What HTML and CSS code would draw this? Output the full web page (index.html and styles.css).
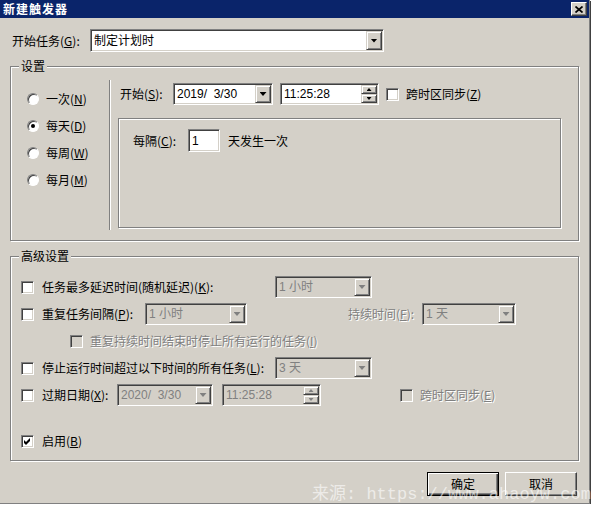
FILE: index.html
```html
<!DOCTYPE html>
<html lang="zh-CN">
<head>
    <meta charset="UTF-8">
    <title>新建触发器</title>
    <link rel="stylesheet" href="styles.css">
</head>
<body>

<div class="dialog">
    <div class="titlebar">
        <span class="title">新建触发器</span>
        <span class="close-btn">
            <svg width="8" height="7" viewBox="0 0 8 7"><path d="M0.5 0.5 L7.5 6.5 M7.5 0.5 L0.5 6.5" stroke="#000" stroke-width="1.7"/></svg>
        </span>
    </div>

    <div class="content">
        <div class="task-row">
            <span class="task-label">开始任务(<u>G</u>):</span>
            <div class="field task-combo"><span class="field-text">制定计划时</span><span class="drop"></span></div>
        </div>

        <!-- 设置 -->
        <div class="group etched settings">
            <span class="legend">设置</span>
            <div class="freq">
                <div class="radio-row"><span class="radio"></span>一次(<u>N</u>)</div>
                <div class="radio-row"><span class="radio checked"></span>每天(<u>D</u>)</div>
                <div class="radio-row"><span class="radio"></span>每周(<u>W</u>)</div>
                <div class="radio-row"><span class="radio"></span>每月(<u>M</u>)</div>
            </div>
            <div class="sep"></div>
            <div class="schedule">
                <div class="start-row">
                    <span class="start-label">开始(<u>S</u>):</span>
                    <div class="field date-combo"><span class="field-text">2019/&nbsp;&nbsp;3/30</span><span class="drop"></span></div>
                    <div class="field time-field">
                        <span class="field-text">11:25:28</span>
                        <span class="spin"><span class="spin-btn up"></span><span class="spin-btn down"></span></span>
                    </div>
                    <span class="check"></span>
                    <span>跨时区同步(<u>Z</u>)</span>
                </div>
                <div class="panel etched">
                    <div class="every-row">
                        <span class="every-label">每隔(<u>C</u>):</span>
                        <div class="field every-input"><span class="field-text">1</span></div>
                        <span class="every-unit">天发生一次</span>
                    </div>
                </div>
            </div>
        </div>

        <!-- 高级设置 -->
        <div class="group etched advanced">
            <span class="legend">高级设置</span>
            <div class="adv-row">
                <span class="check"></span>
                <span class="long-label">任务最多延迟时间(随机延迟)(<u>K</u>):</span>
                <div class="field disabled short-combo"><span class="field-text">1 小时</span><span class="drop"></span></div>
            </div>
            <div class="adv-row">
                <span class="check"></span>
                <span class="repeat-label">重复任务间隔(<u>P</u>):</span>
                <div class="field disabled repeat-combo"><span class="field-text">1 小时</span><span class="drop"></span></div>
                <span class="dim duration-label">持续时间(<u>F</u>):</span>
                <div class="field disabled duration-combo"><span class="field-text">1 天</span><span class="drop"></span></div>
            </div>
            <div class="adv-row indent">
                <span class="check disabled"></span>
                <span class="dim">重复持续时间结束时停止所有运行的任务(<u>I</u>)</span>
            </div>
            <div class="adv-row">
                <span class="check"></span>
                <span class="long-label">停止运行时间超过以下时间的所有任务(<u>L</u>):</span>
                <div class="field disabled short-combo"><span class="field-text">3 天</span><span class="drop"></span></div>
            </div>
            <div class="adv-row">
                <span class="check"></span>
                <span class="expire-label">过期日期(<u>X</u>):</span>
                <div class="field disabled expire-date"><span class="field-text">2020/&nbsp;&nbsp;3/30</span><span class="drop"></span></div>
                <div class="field disabled expire-time">
                    <span class="field-text">11:25:28</span>
                    <span class="spin"><span class="spin-btn up"></span><span class="spin-btn down"></span></span>
                </div>
                <span class="check disabled expire-check"></span>
                <span class="dim">跨时区同步(<u>E</u>)</span>
            </div>
            <div class="adv-row enable-row">
                <span class="check">
                    <svg width="11" height="11" viewBox="0 0 11 11"><polygon points="2,4 4,6 8,2 8,5 4,9 2,7" fill="#000"/></svg>
                </span>
                <span>启用(<u>B</u>)</span>
            </div>
        </div>

        <div class="buttons">
            <span class="btn default">确定</span>
            <span class="btn">取消</span>
        </div>
    </div>

    <div class="watermark">来源: https://www.ahaoyw.com</div>
</div>

</body>
</html>
```

FILE: styles.css
```css
* {
    box-sizing: border-box;
}
body {
    margin: 0;
    background-color: #fff;
    font: 12px/14px "Noto Sans CJK SC", sans-serif;
    color: #000;
    overflow: hidden;
}
u {
    text-decoration: underline;
    text-underline-offset: 1px;
}
.dialog {
    position: relative;
    width: 590px;
    height: 504px;
    background-color: #d4d0c8;
    border-right: 1px solid #808080;
    border-bottom: 1px solid #808080;
    box-shadow: 1px 1px 0 #404040;
}
.titlebar {
    height: 18px;
    background-color: #0a246a;
    display: flex;
    align-items: center;
    padding: 0 2px 0 3px;
}
.title {
    color: #fff;
    font-weight: bold;
    letter-spacing: 1px;
}
.close-btn {
    margin-left: auto;
    width: 16px;
    height: 14px;
    background-color: #d4d0c8;
    border: 1px solid;
    border-color: #fff #404040 #404040 #fff;
    box-shadow: inset -1px -1px #808080;
    display: flex;
    align-items: center;
    justify-content: center;
}
.content {
    padding: 0 10px;
}

/* sunken fields and combo boxes */
.field {
    display: flex;
    align-items: center;
    height: 22px;
    background-color: #fff;
    border: 1px solid;
    border-color: #808080 #fff #fff #808080;
    box-shadow: inset 1px 1px #404040, inset -1px -1px #d4d0c8;
    padding: 1px;
}
.field-text {
    flex: 1;
    padding-left: 2px;
    font-family: "Liberation Sans", "Noto Sans CJK SC", sans-serif;
    white-space: nowrap;
    overflow: hidden;
}
.field.disabled {
    background-color: #d4d0c8;
    color: #808080;
}
.drop,
.spin-btn {
    background-color: #d4d0c8;
    border: 1px solid;
    border-color: #d4d0c8 #404040 #404040 #d4d0c8;
    box-shadow: inset 1px 1px #fff, inset -1px -1px #808080;
    display: flex;
    align-items: center;
    justify-content: center;
}
.drop {
    align-self: stretch;
    width: 16px;
}
.drop::after {
    content: "";
    width: 7px;
    height: 4px;
    background-color: #000;
    clip-path: polygon(0 0, 100% 0, 50% 100%);
}
.field.disabled .drop::after {
    background-color: #808080;
}
.spin {
    align-self: stretch;
    width: 16px;
    display: flex;
    flex-direction: column;
}
.spin-btn {
    flex: 1;
}
.spin-btn::after {
    content: "";
    width: 5px;
    height: 3px;
    background-color: #000;
}
.spin-btn.up::after {
    clip-path: polygon(50% 0, 100% 100%, 0 100%);
}
.spin-btn.down::after {
    clip-path: polygon(0 0, 100% 0, 50% 100%);
}
.field.disabled .spin-btn::after {
    background-color: #808080;
}

.check {
    flex: none;
    width: 13px;
    height: 13px;
    background-color: #fff;
    border: 1px solid;
    border-color: #808080 #fff #fff #808080;
    box-shadow: inset 1px 1px #404040, inset -1px -1px #d4d0c8;
    display: flex;
}
.check.disabled {
    background-color: #d4d0c8;
}
.radio {
    flex: none;
    width: 12px;
    height: 12px;
    border-radius: 50%;
    background-color: #fff;
    border: 1px solid;
    border-color: #808080 #fff #fff #808080;
    box-shadow: inset 1px 1px #404040;
    margin-right: 7px;
    display: flex;
    align-items: center;
    justify-content: center;
}
.radio.checked::after {
    content: "";
    width: 4px;
    height: 4px;
    border-radius: 50%;
    background-color: #000;
}
.dim {
    color: #808080;
    text-shadow: 1px 1px 0 #fff;
}

/* top row */
.task-row {
    display: flex;
    align-items: center;
    margin-top: 11px;
    padding-left: 2px;
}
.task-label {
    width: 78px;
}
.task-combo {
    width: 294px;
    height: 23px;
}

/* group boxes */
.etched {
    border: 1px solid #808080;
    box-shadow: 1px 1px 0 #fff, inset 1px 1px 0 #fff;
}
.group {
    position: relative;
}
.legend {
    position: absolute;
    top: -8px;
    left: 8px;
    padding: 0 2px;
    background-color: #d4d0c8;
}
.settings {
    display: flex;
    margin-top: 14px;
    height: 175px;
}
.freq {
    width: 98px;
    padding: 18px 0 0 16px;
}
.radio-row {
    display: flex;
    align-items: center;
    height: 27px;
}
.sep {
    width: 2px;
    height: 150px;
    margin-top: 13px;
    border-left: 1px solid #808080;
    border-right: 1px solid #fff;
}
.schedule {
    padding: 16px 0 0 7px;
}
.start-row {
    display: flex;
    align-items: center;
    height: 22px;
    padding-left: 2px;
}
.start-label {
    width: 53px;
}
.date-combo {
    width: 100px;
}
.time-field {
    width: 99px;
    margin-left: 7px;
}
.start-row .check {
    margin: 0 7px;
}
.panel {
    margin-top: 13px;
    width: 443px;
    height: 110px;
    padding: 10px 0 0 14px;
}
.every-row {
    display: flex;
    align-items: center;
    height: 23px;
}
.every-label {
    width: 55px;
}
.every-input {
    width: 32px;
    height: 23px;
}
.every-unit {
    margin-left: 8px;
}

/* advanced settings */
.advanced {
    margin-top: 15px;
    height: 205px;
    padding: 19px 0 0 10px;
    display: flex;
    flex-direction: column;
    gap: 5px;
}
.adv-row {
    display: flex;
    align-items: center;
    height: 22px;
}
.adv-row > .check {
    margin-right: 8px;
}
.adv-row.indent {
    padding-left: 49px;
}
.adv-row.indent > .check {
    margin-right: 7px;
}
.long-label {
    width: 233px;
}
.short-combo {
    width: 97px;
}
.repeat-label {
    width: 103px;
}
.repeat-combo {
    width: 102px;
}
.duration-label {
    margin-left: 101px;
    width: 74px;
}
.duration-combo {
    width: 94px;
}
.expire-label {
    width: 75px;
}
.expire-date {
    width: 96px;
}
.expire-time {
    width: 99px;
    margin-left: 9px;
}
.adv-row > .expire-check {
    margin-left: 79px;
    margin-right: 7px;
}
.enable-row {
    margin-top: 19px;
}

/* buttons */
.buttons {
    display: flex;
    justify-content: flex-end;
    gap: 6px;
    margin-top: 11px;
    padding-right: 2px;
}
.btn {
    width: 72px;
    height: 24px;
    background-color: #d4d0c8;
    border: 1px solid;
    border-color: #fff #404040 #404040 #fff;
    box-shadow: inset -1px -1px #808080, inset 1px 1px #d4d0c8;
    display: flex;
    align-items: center;
    justify-content: center;
}
.btn.default {
    border-color: #000;
    box-shadow: inset 1px 1px #fff, inset -1px -1px #404040, inset -2px -2px #808080;
}

.watermark {
    position: absolute;
    left: 312px;
    top: 484px;
    font: 17px/22px "Liberation Mono", "Noto Sans CJK SC", monospace;
    color: rgba(255, 255, 255, 0.6);
    white-space: nowrap;
    pointer-events: none;
}
```
